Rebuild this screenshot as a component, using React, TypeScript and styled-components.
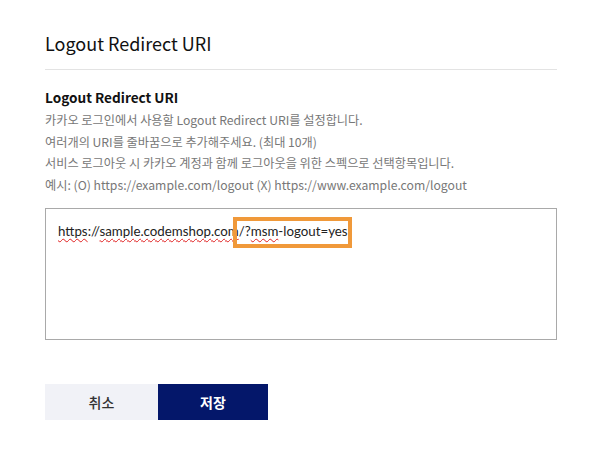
import React from "react";
import styled, { createGlobalStyle } from "styled-components";

const Global = createGlobalStyle`
  html, body { margin: 0; padding: 0; background: #fff; }
  body { font-family: "Noto Sans CJK KR", "Noto Sans", sans-serif; }
`;

const Page = styled.div`
  width: 603px;
  height: 463px;
  box-sizing: border-box;
  padding: 30px 46px 0 45px;
  display: flex;
  flex-direction: column;
`;

const Title = styled.h1`
  margin: 0;
  font-size: 18px;
  line-height: 26px;
  font-weight: 400;
  color: #111;
`;

const Divider = styled.hr`
  margin: 13px 0 0;
  border: 0;
  height: 1px;
  background: #e3e3e3;
`;

const SubTitle = styled.h2`
  margin: 16px 0 0;
  font-size: 13.6px;
  line-height: 22px;
  font-weight: 700;
  color: #111;
`;

const Desc = styled.p`
  margin: 2px 0 0;
  font-size: 12.2px;
  line-height: 21.5px;
  color: #777;
`;

const Box = styled.div`
  margin-top: 12px;
  height: 132px;
  box-sizing: border-box;
  border: 1px solid #a9a9a9;
  padding: 12px 12px;
  font-family: Lato, "Liberation Sans", sans-serif;
  font-size: 13.3px;
  line-height: 20px;
  color: #222;
`;

const Misspelled = styled.span`
  text-decoration: underline wavy #e02020;
  text-decoration-thickness: 1px;
  text-underline-offset: 2px;
`;

const Highlight = styled.span`
  position: relative;
  &::after {
    content: "";
    position: absolute;
    left: -6px;
    right: -4px;
    top: -6px;
    bottom: -9px;
    border: 4px solid #f0993a;
  }
`;

const Actions = styled.div`
  margin-top: 44px;
  display: flex;
`;

const Button = styled.button<{ $primary?: boolean }>`
  width: ${(p) => (p.$primary ? "110px" : "113px")};
  height: 36px;
  border: 0;
  padding: 0;
  font-family: "Noto Sans CJK KR", sans-serif;
  font-size: 14px;
  font-weight: ${(p) => (p.$primary ? 700 : 500)};
  background: ${(p) => (p.$primary ? "#04176a" : "#f1f2f7")};
  color: ${(p) => (p.$primary ? "#fff" : "#333")};
  cursor: pointer;
`;

export default function App() {
  return (
    <>
      <Global />
      <Page>
        <Title>Logout Redirect URI</Title>
        <Divider />
        <SubTitle>Logout Redirect URI</SubTitle>
        <Desc>
          카카오 로그인에서 사용할 Logout Redirect URI를 설정합니다.
          <br />
          여러개의 URI를 줄바꿈으로 추가해주세요. (최대 10개)
          <br />
          서비스 로그아웃 시 카카오 계정과 함께 로그아웃을 위한 스펙으로 선택항목입니다.
          <br />
          예시: (O) https://example.com/logout (X) https://www.example.com/logout
        </Desc>
        <Box>
          <Misspelled>https</Misspelled>://<Misspelled>sample.codemshop.com</Misspelled>
          <Highlight>
            /?<Misspelled>msm</Misspelled>-logout=yes
          </Highlight>
        </Box>
        <Actions>
          <Button>취소</Button>
          <Button $primary>저장</Button>
        </Actions>
      </Page>
    </>
  );
}
